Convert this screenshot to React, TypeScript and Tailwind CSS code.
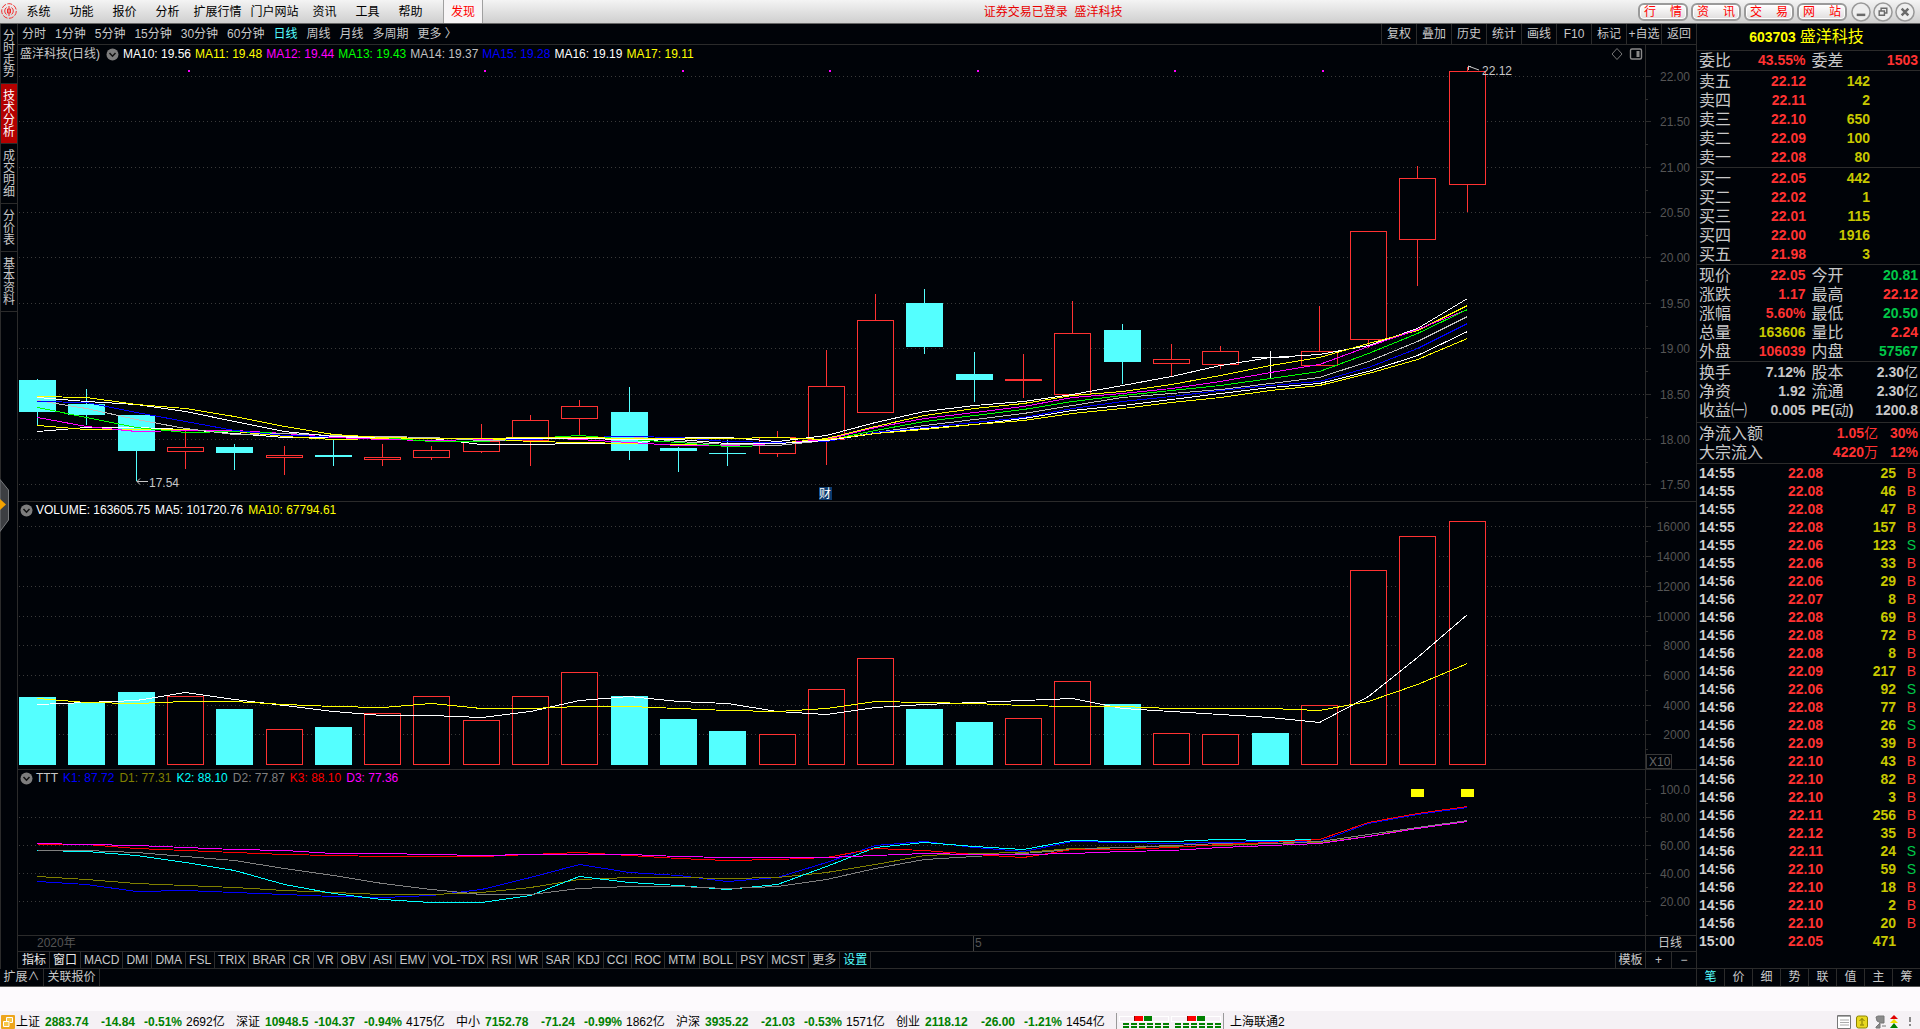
import React from "react";

/* ---------- shared data ---------- */

const PITCH = 49.3;
const cx = (i: number) => Math.round(37 + i * PITCH);
const UP = "#ff3232";
const DOWN = "#54ffff";
const BG = "#000308";
const LINE = "#2b2b2b";

type Candle = ["u" | "d" | "w", number, number, number, number];

/* kind, body top, body bottom, wick top, wick bottom */
const candles: Candle[] = [
  ["d", 380, 412, 379, 425],
  ["d", 404, 415, 389, 425],
  ["d", 415, 451, 415, 481],
  ["u", 447, 452, 431, 469],
  ["d", 447, 453, 444, 470],
  ["u", 455, 458, 446, 475],
  ["d", 455, 457, 439, 466],
  ["u", 457, 460, 444, 466],
  ["u", 450, 458, 446, 460],
  ["u", 441, 452, 424, 453],
  ["u", 420, 441, 415, 466],
  ["u", 406, 419, 400, 435],
  ["d", 412, 451, 387, 460],
  ["d", 448, 451, 447, 472],
  ["d", 453, 454, 440, 466],
  ["u", 437, 454, 431, 457],
  ["u", 386, 440, 350, 465],
  ["u", 320, 413, 294, 320],
  ["d", 303, 347, 289, 354],
  ["d", 374, 380, 352, 402],
  ["u", 379, 381, 354, 398],
  ["u", 333, 395, 301, 333],
  ["d", 330, 362, 324, 384],
  ["u", 359, 364, 344, 376],
  ["u", 351, 365, 346, 369],
  ["w", 357, 358, 351, 378],
  ["u", 351, 366, 306, 351],
  ["u", 231, 340, 231, 348],
  ["u", 178, 240, 166, 286],
  ["u", 71, 185, 67, 212],
];

const volumeTops = [
  697, 703, 692, 696, 709, 729, 727, 713, 696, 720, 696, 672, 696, 719, 731, 734, 689, 658, 709, 722, 718, 681,
  704, 733, 734, 733, 705, 570, 536, 521,
];

const maLines: [string, number[]][] = [
  ["#ffffff", [431, 427, 427, 429, 433, 437, 437, 437, 438, 444, 444, 443, 443, 437, 437, 441, 435, 422, 411, 405, 401, 394, 385, 376, 365, 357, 354, 345, 328, 298]],
  ["#ffff00", [425, 429, 429, 429, 431, 436, 439, 438, 438, 438, 441, 442, 443, 444, 445, 443, 438, 426, 415, 408, 403, 395, 391, 384, 375, 365, 357, 343, 330, 305]],
  ["#ff00ff", [417, 426, 431, 430, 430, 433, 437, 439, 440, 439, 437, 439, 442, 445, 445, 443, 439, 427, 418, 412, 406, 397, 393, 388, 381, 372, 364, 346, 329, 309]],
  ["#00ff00", [407, 417, 427, 432, 431, 433, 435, 437, 441, 441, 438, 435, 439, 442, 446, 445, 440, 430, 421, 415, 409, 401, 395, 390, 385, 378, 371, 353, 333, 309]],
  ["#c0c0c0", [400, 408, 419, 428, 434, 433, 435, 436, 437, 440, 439, 437, 436, 441, 444, 445, 440, 432, 425, 419, 413, 405, 397, 393, 389, 383, 377, 361, 341, 316]],
  ["#0000ff", [401, 402, 412, 421, 430, 435, 436, 437, 438, 438, 439, 437, 436, 437, 441, 442, 441, 432, 427, 422, 417, 408, 401, 396, 390, 385, 381, 367, 348, 323]],
  ["#ffffff", [397, 401, 404, 411, 421, 431, 436, 437, 438, 438, 438, 438, 439, 439, 443, 443, 440, 433, 428, 424, 418, 410, 405, 399, 393, 387, 383, 371, 355, 331]],
  ["#ffff00", [396, 397, 404, 408, 416, 426, 434, 437, 438, 438, 437, 437, 438, 438, 438, 437, 439, 433, 429, 424, 420, 413, 408, 402, 397, 390, 385, 373, 359, 338]],
];

const volLines: [string, number[]][] = [
  ["#ffffff", [704, 702, 700, 692, 699, 705, 711, 715, 715, 717, 711, 700, 696, 701, 703, 711, 714, 707, 704, 702, 700, 698, 708, 711, 714, 717, 722, 696, 657, 614]],
  ["#ffff00", [698, 702, 703, 701, 701, 704, 706, 707, 703, 708, 708, 706, 706, 708, 710, 711, 708, 701, 702, 703, 705, 706, 706, 708, 708, 708, 710, 701, 684, 663]],
];

const tttLines: [string, number[]][] = [
  ["#0000ff", [881, 884, 891, 890, 892, 894, 896, 897, 895, 889, 877, 864, 872, 875, 881, 877, 862, 845, 841, 847, 851, 841, 842, 843, 842, 841, 841, 823, 814, 807]],
  ["#808000", [876, 879, 883, 885, 887, 890, 892, 894, 894, 892, 887, 879, 877, 877, 878, 877, 872, 864, 855, 853, 852, 848, 847, 846, 845, 843, 842, 836, 827, 821]],
  ["#00ffff", [850, 851, 855, 862, 870, 884, 893, 899, 902, 902, 895, 876, 882, 885, 889, 884, 866, 847, 842, 846, 849, 840, 841, 841, 839, 840, 839, 822, 813, 806]],
  ["#808080", [850, 850, 852, 856, 860, 868, 875, 883, 889, 894, 894, 888, 886, 886, 888, 886, 879, 868, 859, 856, 853, 849, 847, 845, 843, 843, 841, 834, 827, 820]],
  ["#ff0000", [844, 844, 848, 850, 852, 854, 855, 856, 856, 856, 854, 852, 855, 858, 860, 859, 857, 848, 850, 854, 857, 849, 849, 847, 844, 842, 839, 822, 813, 806]],
  ["#ff00ff", [843, 844, 845, 847, 849, 850, 853, 853, 854, 855, 854, 854, 854, 856, 857, 857, 857, 855, 853, 854, 854, 853, 851, 850, 847, 845, 843, 836, 828, 821]],
];

const priceAxis: [number, string][] = [
  [76, "22.00"], [121, "21.50"], [167, "21.00"], [212, "20.50"], [257, "20.00"],
  [303, "19.50"], [348, "19.00"], [394, "18.50"], [439, "18.00"], [484, "17.50"],
];
const volAxis: [number, string][] = [
  [526, "16000"], [556, "14000"], [586, "12000"], [616, "10000"],
  [645, "8000"], [675, "6000"], [705, "4000"], [734, "2000"],
];
const tttAxis: [number, string][] = [
  [789, "100.0"], [817, "80.00"], [845, "60.00"], [873, "40.00"], [901, "20.00"],
];

const menus = ["系统", "功能", "报价", "分析", "扩展行情", "门户网站", "资讯", "工具", "帮助"];
const periods = ["分时", "1分钟", "5分钟", "15分钟", "30分钟", "60分钟", "日线", "周线", "月线", "多周期", "更多 〉"];
const tools = ["复权", "叠加", "历史", "统计", "画线", "F10", "标记", "+自选", "返回"];
const sideTabs = ["分时走势", "技术分析", "成交明细", "分价表", "基本资料"];
const indicators = [
  "指标", "窗口", "MACD", "DMI", "DMA", "FSL", "TRIX", "BRAR", "CR", "VR", "OBV", "ASI", "EMV", "VOL-TDX",
  "RSI", "WR", "SAR", "KDJ", "CCI", "ROC", "MTM", "BOLL", "PSY", "MCST", "更多", "设置",
];

const asks: [string, string, string][] = [
  ["卖五", "22.12", "142"], ["卖四", "22.11", "2"], ["卖三", "22.10", "650"], ["卖二", "22.09", "100"], ["卖一", "22.08", "80"],
];
const bids: [string, string, string][] = [
  ["买一", "22.05", "442"], ["买二", "22.02", "1"], ["买三", "22.01", "115"], ["买四", "22.00", "1916"], ["买五", "21.98", "3"],
];

const R = "text-[#ff3232]";
const G = "text-[#00c848]";
const Y = "text-[#c8c800]";
const W = "text-[#c8c8c8]";

type Pair = [string, string, string, string, string, string];
const quotes: Pair[] = [
  ["现价", "22.05", R, "今开", "20.81", G],
  ["涨跌", "1.17", R, "最高", "22.12", R],
  ["涨幅", "5.60%", R, "最低", "20.50", G],
  ["总量", "163606", Y, "量比", "2.24", R],
  ["外盘", "106039", R, "内盘", "57567", G],
];
const basics: Pair[] = [
  ["换手", "7.12%", W, "股本", "2.30亿", W],
  ["净资", "1.92", W, "流通", "2.30亿", W],
  ["收益㈠", "0.005", W, "PE(动)", "1200.8", W],
];

const ticks: [string, string, string, string][] = [
  ["14:55", "22.08", "25", "B"], ["14:55", "22.08", "46", "B"], ["14:55", "22.08", "47", "B"], ["14:55", "22.08", "157", "B"],
  ["14:55", "22.06", "123", "S"], ["14:55", "22.06", "33", "B"], ["14:56", "22.06", "29", "B"], ["14:56", "22.07", "8", "B"],
  ["14:56", "22.08", "69", "B"], ["14:56", "22.08", "72", "B"], ["14:56", "22.08", "8", "B"], ["14:56", "22.09", "217", "B"],
  ["14:56", "22.06", "92", "S"], ["14:56", "22.08", "77", "B"], ["14:56", "22.08", "26", "S"], ["14:56", "22.09", "39", "B"],
  ["14:56", "22.10", "43", "B"], ["14:56", "22.10", "82", "B"], ["14:56", "22.10", "3", "B"], ["14:56", "22.11", "256", "B"],
  ["14:56", "22.12", "35", "B"], ["14:56", "22.11", "24", "S"], ["14:56", "22.10", "59", "S"], ["14:56", "22.10", "18", "B"],
  ["14:56", "22.10", "2", "B"], ["14:56", "22.10", "20", "B"], ["15:00", "22.05", "471", ""],
];

const indices = [
  ["上证", "2883.74", "-14.84", "-0.51%", "2692亿"],
  ["深证", "10948.5", "-104.37", "-0.94%", "4175亿"],
  ["中小", "7152.78", "-71.24", "-0.99%", "1862亿"],
  ["沪深", "3935.22", "-21.03", "-0.53%", "1571亿"],
  ["创业", "2118.12", "-26.00", "-1.21%", "1454亿"],
];

/* ---------- chart pieces ---------- */

function Lines({ data }: { data: [string, number[]][] }) {
  return (
    <g shapeRendering="crispEdges" fill="none">
      {data.map(([color, ys], k) => (
        <polyline key={k} stroke={color} points={ys.map((y, i) => `${cx(i) + 0.5},${y + 0.5}`).join(" ")} />
      ))}
    </g>
  );
}

function Axis({ rows, top, bottom, half, gridFrom = 0 }: { rows: [number, string][]; top: number; bottom: number; half: number; gridFrom?: number }) {
  return (
    <g>
      <g shapeRendering="crispEdges">
        <line x1="1645.5" x2="1645.5" y1={top} y2={bottom} stroke={LINE} />
        {rows.map(([y], i) => (
          <g key={y}>
            {i >= gridFrom && <line x1="19" x2="1645" y1={y + 0.5} y2={y + 0.5} stroke="#3a3a3a" strokeDasharray="1 3" />}
            <line x1="1646" x2="1651" y1={y + 0.5} y2={y + 0.5} stroke={LINE} />
            <line x1="1646" x2="1648" y1={y + half + 0.5} y2={y + half + 0.5} stroke={LINE} />
          </g>
        ))}
      </g>
      {rows.map(([y, t]) => (
        <text key={t} x="1690" y={y + 5} textAnchor="end" fontSize="12" fill="#555555">{t}</text>
      ))}
    </g>
  );
}

function PriceChart() {
  return (
    <svg viewBox="18 64 1678 437" preserveAspectRatio="none" className="block h-0 min-h-0 w-full grow-[437] overflow-visible">
      <Axis rows={priceAxis} top={64} bottom={501} half={23} />
      <g fill="#ff00ff">
        {[188, 484, 682, 829, 977, 1174, 1322].map((x) => <rect key={x} x={x} y="70" width="2" height="2" />)}
      </g>
      <g shapeRendering="crispEdges">
        {candles.map(([kind, t, b, wt, wb], i) => {
          const x = cx(i);
          const color = kind === "u" ? UP : kind === "d" ? DOWN : "#ffffff";
          return (
            <g key={i}>
              {wt < t && <line x1={x + 0.5} x2={x + 0.5} y1={wt} y2={t} stroke={color} />}
              {wb > b && <line x1={x + 0.5} x2={x + 0.5} y1={b} y2={wb} stroke={color} />}
              {kind === "u"
                ? <rect x={x - 17.5} y={t + 0.5} width="36" height={b - t - 1} fill={BG} stroke={color} />
                : <rect x={x - 18} y={t} width="37" height={b - t} fill={color} />}
            </g>
          );
        })}
      </g>
      <Lines data={maLines} />
      <g stroke="#c8c8c8" fill="none">
        <path d="M1468 66.5h3M1468.5 66v4M1468 66l11 4" />
        <path d="M137 481.5h11M140 478.5l-3 3l3 3" />
      </g>
      <text x="1482" y="75" fontSize="12" fill="#c8c8c8">22.12</text>
      <text x="149" y="487" fontSize="12" fill="#c8c8c8">17.54</text>
      <rect x="819" y="487" width="13" height="13" fill="#0b3a6e" />
      <text x="825" y="498" textAnchor="middle" fontSize="12" fill="#ffffff">财</text>
    </svg>
  );
}

function VolumeChart() {
  return (
    <svg viewBox="18 520 1678 249" preserveAspectRatio="none" className="block h-0 min-h-0 w-full grow-[249] overflow-visible">
      <Axis rows={volAxis} top={520} bottom={769} half={15} />
      <g shapeRendering="crispEdges">
        {volumeTops.map((t, i) => {
          const x = cx(i);
          const up = candles[i][0] === "u";
          return up
            ? <rect key={i} x={x - 17.5} y={t + 0.5} width="36" height={764 - t} fill={BG} stroke={UP} />
            : <rect key={i} x={x - 18} y={t} width="37" height={765 - t} fill={DOWN} />;
        })}
        <rect x="1646.5" y="754.5" width="25" height="14" fill="none" stroke="#383838" />
      </g>
      <Lines data={volLines} />
      <text x="1649" y="766" fontSize="12" fill="#666666">X10</text>
    </svg>
  );
}

function TttChart() {
  return (
    <svg viewBox="18 788 1678 147" preserveAspectRatio="none" className="block h-0 min-h-0 w-full grow-[147] overflow-visible">
      <Axis rows={tttAxis} top={788} bottom={935} half={14} gridFrom={1} />
      <rect x="1411" y="789" width="13" height="8" fill="#ffff00" />
      <rect x="1461" y="789" width="13" height="8" fill="#ffff00" />
      <Lines data={tttLines} />
    </svg>
  );
}

function Chevron({ label }: { label: string }) {
  return (
    <button aria-label={label} className="shrink-0">
      <svg width="13" height="13" viewBox="0 0 13 13">
        <circle cx="6.5" cy="6.5" r="6" fill="#7d7d7d" />
        <path d="M3.5 5l3 3.2L9.500 5" fill="none" stroke="#111" strokeWidth="1.500" />
      </svg>
    </button>
  );
}

/* ---------- bars ---------- */

function TopBar() {
  return (
    <header className="flex h-6 shrink-0 items-center border-b border-[#666] bg-linear-to-b from-[#f4f4f4] to-[#cfcfcf] text-black">
      <div className="flex flex-[988_1_0] items-center self-stretch">
        <svg width="17" height="17" viewBox="0 0 17 17" fill="none" stroke="#f03030">
          <circle cx="9" cy="8" r="7.300" strokeDasharray="5 1.500" />
          <path d="M6.500 4.500a4.300 4.300 0 0 0 0 7M11.500 4.500a4.300 4.300 0 0 1 0 7" />
          <path d="M9 3v10M7.500 6v4h3V6z" />
        </svg>
        <nav className="flex">
          {menus.map((m) => (
            <button key={m} className={`${m.length > 2 ? "w-[57px]" : "w-[43px]"} text-center whitespace-nowrap`}>{m}</button>
          ))}
        </nav>
        <button className="ml-[11px] w-10 self-stretch border-x border-[#a0a0a0] bg-[#f7f5f6] text-[#ff0000]">发现</button>
      </div>
      <div className="text-[#e80000]">证券交易已登录&nbsp; 盛洋科技</div>
      <div className="flex flex-[796_1_0] items-center justify-end gap-[3px] pr-[5px]">
        {["行情", "资讯", "交易", "网站"].map((t) => (
          <button key={t} className="flex h-[18px] w-[50px] items-center justify-between rounded-md border-2 border-[#9a9a9a] bg-linear-to-b from-white to-[#e0dede] px-1 text-[#ff0000] shadow-[inset_0_0_0_1px_white]">
            <span>{t[0]}</span><span>{t[1]}</span>
          </button>
        ))}
        <div className="ml-px flex gap-[2px]">
          {[
            ["最小化", "M6 13.500h9"],
            ["还原", "M8.500 9V6.500h6v5H12M6.500 9.500h5.500v4.500H6.500z"],
            ["关闭", "M7 7l7 7M14 7l-7 7"],
          ].map(([label, d], i) => (
            <button key={label} aria-label={label}>
              <svg width="20" height="20" viewBox="0 0 21 21" fill="none">
                <circle cx="10.500" cy="10.500" r="9.500" stroke="#999999" strokeWidth="1.600" fill="#eeeeee" />
                <path d={d} stroke="#6a6a6a" strokeWidth={i === 1 ? 1.5 : 2.6} />
              </svg>
            </button>
          ))}
        </div>
      </div>
    </header>
  );
}

function SideTabs() {
  return (
    <nav className="relative flex w-[18px] shrink-0 flex-col border-x border-[#2b2b2b]">
      {sideTabs.map((t) => (
        <button
          key={t}
          className={`flex w-full items-center justify-center border-b border-[#2b2b2b] leading-[12px] ${t.length === 3 ? "h-12" : "h-[60px]"} ${t === "技术分析" ? "bg-[#b40000] text-white" : "text-[#c8c8c8]"}`}
        >
          <span className="w-3 break-all">{t}</span>
        </button>
      ))}
      <button aria-label="展开侧栏" className="absolute top-[455px] -left-px">
        <svg width="9" height="53" viewBox="0 0 9 53">
          <path d="M0 .5L8.500 11v30L0 52.500z" fill="#3c3e42" stroke="#77797c" />
          <path d="M0 20l6 5.500l-6 5.500z" fill="#f5a300" />
        </svg>
      </button>
    </nav>
  );
}

function Toolbar() {
  return (
    <div className="flex h-[21px] shrink-0 items-stretch border-b border-[#2b2b2b]">
      <div className="flex flex-1 items-center gap-[9px] pl-1">
        {periods.map((p) => (
          <button key={p} className={`whitespace-nowrap ${p === "日线" ? "text-[#54ffff]" : ""}`}>{p}</button>
        ))}
      </div>
      {tools.map((t) => (
        <button key={t} className="w-[35px] border-l border-[#2b2b2b] text-center whitespace-nowrap">{t}</button>
      ))}
    </div>
  );
}

function PriceHeader() {
  const ma: [string, string][] = [
    ["MA10: 19.56", "text-white"], ["MA11: 19.48", "text-[#ffff00]"], ["MA12: 19.44", "text-[#ff00ff]"], ["MA13: 19.43", "text-[#00ff00]"],
    ["MA14: 19.37", "text-[#c0c0c0]"], ["MA15: 19.28", "text-[#0000ff]"], ["MA16: 19.19", "text-white"], ["MA17: 19.11", "text-[#ffff00]"],
  ];
  return (
    <div className="flex h-[19px] shrink-0">
      <div className="flex flex-1 items-center gap-1 pb-px pl-[2px]">
        <span className="mr-[2px]">盛洋科技(日线)</span>
        <Chevron label="均线设置" />
        {ma.map(([t, c]) => <span key={t} className={c}>{t}</span>)}
        <svg width="32" height="14" viewBox="0 0 32 14" fill="none" stroke="#8a8a8a" className="mr-[2px] ml-auto">
          <path d="M6 1.500l5 5.500l-5 5.500L1 7z" stroke="#777" />
          <rect x="19.500" y="2" width="11" height="10" rx="1.500" strokeWidth="1.400" />
          <rect x="25.500" y="4" width="3" height="6" fill="#8a8a8a" stroke="none" />
        </svg>
      </div>
      <div className="w-[51px] border-l border-[#2b2b2b]" />
    </div>
  );
}

function SubHeader({ label, items }: { label: string; items: [string, string][] }) {
  return (
    <div className="flex h-[18px] shrink-0">
      <div className="flex flex-1 items-center gap-[5px] pb-[2px] pl-[2px]">
        <Chevron label={label} />
        {items.map(([t, c]) => <span key={t} className={c}>{t}</span>)}
      </div>
      <div className="w-[51px] border-l border-[#2b2b2b]" />
    </div>
  );
}

function ChartColumn() {
  return (
    <section className="flex min-w-0 flex-1 flex-col">
      <Toolbar />
      <PriceHeader />
      <PriceChart />
      <div className="h-px shrink-0 bg-[#2b2b2b]" />
      <SubHeader
        label="成交量设置"
        items={[["VOLUME: 163605.75", "-ml-[2px] text-white"], ["MA5: 101720.76", "text-white"], ["MA10: 67794.61", "text-[#ffff00]"]]}
      />
      <VolumeChart />
      <div className="h-px shrink-0 bg-[#2b2b2b]" />
      <SubHeader
        label="TTT设置"
        items={[
          ["TTT", "-ml-[2px]"], ["K1: 87.72", "text-[#0000ff]"], ["D1: 77.31", "text-[#808000]"], ["K2: 88.10", "text-[#00ffff]"],
          ["D2: 77.87", "text-[#808080]"], ["K3: 88.10", "text-[#ff0000]"], ["D3: 77.36", "text-[#ff00ff]"],
        ]}
      />
      <TttChart />
      <div className="flex h-[17px] shrink-0 border-y border-[#2b2b2b] leading-[15px] text-[#555]">
        <div className="flex flex-1">
          <span className="w-[58.700%] pl-[19px]">2020年</span>
          <span className="border-l border-[#444] pl-px">5</span>
        </div>
        <span className="w-[51px] border-l border-[#2b2b2b] pl-3 text-[#c8c8c8]">日线</span>
      </div>
      <div className="flex h-[17px] shrink-0 border-b border-[#2b2b2b] leading-[15px]">
        <div className="flex flex-1 pl-px">
          {indicators.map((t) => (
            <button
              key={t}
              className={`border-r border-[#2b2b2b] px-[3px] whitespace-nowrap ${t === "设置" ? "text-[#54ffff]" : ""} ${t === "指标" || t === "窗口" ? "text-[#e8e8e8]" : ""}`}
            >
              {t}
            </button>
          ))}
        </div>
        <button className="w-[30px] border-l border-[#2b2b2b]">模板</button>
        <button className="w-[26px] border-l border-[#2b2b2b]">+</button>
        <button className="w-[25px] border-l border-[#2b2b2b]">−</button>
      </div>
    </section>
  );
}

/* ---------- quote panel ---------- */

function Book({ rows }: { rows: [string, string, string][] }) {
  return (
    <div className="border-t border-[#2b2b2b] pt-px">
      <table className="w-full table-fixed text-right font-bold">
        <colgroup><col className="w-[48px]" /><col className="w-[61px]" /><col className="w-[64px]" /><col /></colgroup>
        <tbody>
          {rows.map(([l, p, v]) => (
            <tr key={l} className="h-[19px] leading-[19px]">
              <th scope="row" className="pl-[2px] text-left text-base leading-[19px] font-normal">{l}</th>
              <td className={R}>{p}</td>
              <td className={Y}>{v}</td>
              <td />
            </tr>
          ))}
        </tbody>
      </table>
    </div>
  );
}

function Pairs({ rows }: { rows: Pair[] }) {
  return (
    <div>
      {rows.map(([a, av, ac, b, bv, bc]) => (
        <div key={a} className="grid h-[19px] grid-cols-2 pr-[2px] leading-[19px] whitespace-nowrap">
          <div className="flex justify-between pr-[2px] pl-[2px]">
            <span className="text-base leading-[19px]">{a}</span>
            <span className={`font-bold ${ac}`}>{av}</span>
          </div>
          <div className="flex justify-between pl-1">
            <span className={b.startsWith("PE") ? "font-bold" : "text-base leading-[19px]"}>
              {b.startsWith("PE") ? <>PE(<span className="font-normal">动</span>)</> : b}
            </span>
            <span className={`font-bold ${bc}`}>
              {bv.replace("亿", "")}
              {bv.endsWith("亿") && <span className="font-normal">亿</span>}
            </span>
          </div>
        </div>
      ))}
    </div>
  );
}

function QuotePanel() {
  return (
    <aside className="flex w-[224px] shrink-0 flex-col border-l border-[#2b2b2b] text-sm">
      <h1 className="flex h-[26px] items-center justify-center gap-1 pr-1 text-[#ffff00]">
        <span className="font-bold">603703</span>
        <span className="text-base">盛洋科技</span>
      </h1>
      <div className="border-t border-[#2b2b2b]"><Pairs rows={[["委比", "43.55%", R, "委差", "1503", R]]} /></div>
      <Book rows={asks} />
      <Book rows={bids} />
      <div className="border-t border-[#2b2b2b] pt-px"><Pairs rows={quotes} /></div>
      <div className="border-t border-[#2b2b2b] pt-px pb-[2px]"><Pairs rows={basics} /></div>
      <div className="border-t border-[#2b2b2b] pt-px pb-px text-[#ff3232]">
        {[["净流入额", "1.05", "亿", "30%"], ["大宗流入", "4220", "万", "12%"]].map(([l, v, u, p]) => (
          <div key={l} className="flex h-[19px] pr-[2px] pl-[2px] leading-[19px] font-bold">
            <span className="text-base leading-[19px] font-normal text-[#c8c8c8]">{l}</span>
            <span className="flex-1 text-right">{v}<span className="font-normal">{u}</span></span>
            <span className="w-10 text-right">{p}</span>
          </div>
        ))}
      </div>
      <table className="w-full table-fixed border-t border-[#2b2b2b] text-right font-bold">
        <colgroup><col className="w-[56px]" /><col className="w-[70px]" /><col className="w-[73px]" /><col /></colgroup>
        <tbody>
          {ticks.map(([time, p, v, side], i) => (
            <tr key={i} className="h-[18px] leading-[18px]">
              <td className="pl-[2px] text-left text-[#d0d0d0]">{time}</td>
              <td className={R}>{p}</td>
              <td className={Y}>{v}</td>
              <td className={`pr-1 font-normal ${side === "S" ? G : R}`}>{side}</td>
            </tr>
          ))}
        </tbody>
      </table>
    </aside>
  );
}

function BottomTabs() {
  return (
    <div className="flex h-[18px] shrink-0 border-b border-[#555] leading-[17px]">
      <button className="w-[44px] border-r border-[#2b2b2b]">扩展∧</button>
      <button className="w-[56px] border-r border-[#2b2b2b]">关联报价</button>
      <nav className="-mt-px ml-auto grid w-[224px] grid-cols-8 border-t border-[#2b2b2b]">
        {["笔", "价", "细", "势", "联", "值", "主", "筹"].map((t) => (
          <button key={t} className={`border-l border-[#2b2b2b] ${t === "笔" ? "text-[#54ffff]" : ""}`}>{t}</button>
        ))}
      </nav>
    </div>
  );
}

function Meter({ at }: { at: number }) {
  return (
    <svg width="50" height="14" viewBox="0 0 50 14" shapeRendering="crispEdges">
      <rect x=".5" y="1.500" width="49" height="5" fill="#f4eff4" stroke="#fff" />
      <rect x={at} y="1" width="9" height="5" fill="#ff0000" />
      <rect x={at} y="1" width="1" height="5" fill="#900000" />
      <rect x={at + 10} y="1" width="8" height="5" fill="#008000" />
      {[4, 12, 20, 28, 36, 44].map((x) => (
        <g key={x} fill="#008000">
          <rect x={x} y="8" width="6" height="2" />
          <rect x={x} y="11" width="6" height="2" />
        </g>
      ))}
    </svg>
  );
}

function StatusBar() {
  return (
    <footer className="flex h-[18px] shrink-0 items-end overflow-hidden bg-[#f5f1f5] leading-[14px] text-black">
      <svg width="14" height="14" viewBox="0 0 14 14" className="mx-px">
        <rect width="14" height="14" rx="1" fill="#eda51c" />
        <path d="M5.500 6V2.500h6v5H9M2.500 6.500h5.500v5H2.500z" fill="#f7c84a" stroke="#fff" />
      </svg>
      {indices.map(([n, v, c, p, a]) => (
        <div key={n} className="flex w-[220px] font-bold text-[#008000]">
          <span className="w-[29px] font-normal text-black">{n}</span>
          <span className="w-[46px]">{v}</span>
          <span className="w-[44px] text-right">{c}</span>
          <span className="w-[47px] text-right">{p}</span>
          <span className="pl-1 font-normal text-black">{a}</span>
        </div>
      ))}
      <div className="flex h-4 items-end gap-[2px] border-x border-[#999] px-[2px]">
        <Meter at={15} />
        <Meter at={16} />
      </div>
      <span className="pl-[6px]">上海联通2</span>
      <svg width="83" height="15" viewBox="0 0 83 15" className="ml-auto">
        <path d="M.5 1.500h13v13H.5z" fill="#fff" stroke="#777" />
        <path d="M1 2.500h12M3 6h9M3 8.500h9M3 11h9" stroke="#aaa" />
        <rect x="19.500" y="2" width="11" height="12" rx="2" fill="#e8d820" stroke="#8d8400" />
        <path d="M25 4.500v6M22.500 7L25 4.500L27.500 7M23 11h4" stroke="#7c7400" fill="none" />
        <path d="M39 3l2-1l6 0v7h-3l-4-2zM43 9l-4 4v1h4zM45 12h4" fill="#8a8a8a" stroke="#777" />
        <path d="M57 1l4 4h-8z" fill="#e00000" />
        <path d="M57 5l4 4h-8z" fill="#f0e000" />
        <path d="M57 9l4 5h-8z" fill="#008000" />
        <path d="M73 3v5M73 10v2" stroke="#888" strokeWidth="2" />
      </svg>
    </footer>
  );
}

export default function App() {
  return (
    <div className="flex min-h-screen flex-col bg-[#000308] font-['Liberation_Sans','Noto_Sans_CJK_SC',sans-serif] text-xs text-[#c8c8c8]">
      <TopBar />
      <main className="flex flex-1">
        <SideTabs />
        <ChartColumn />
        <QuotePanel />
      </main>
      <BottomTabs />
      <div className="h-6 shrink-0 bg-[#fdfafd]" />
      <StatusBar />
    </div>
  );
}
